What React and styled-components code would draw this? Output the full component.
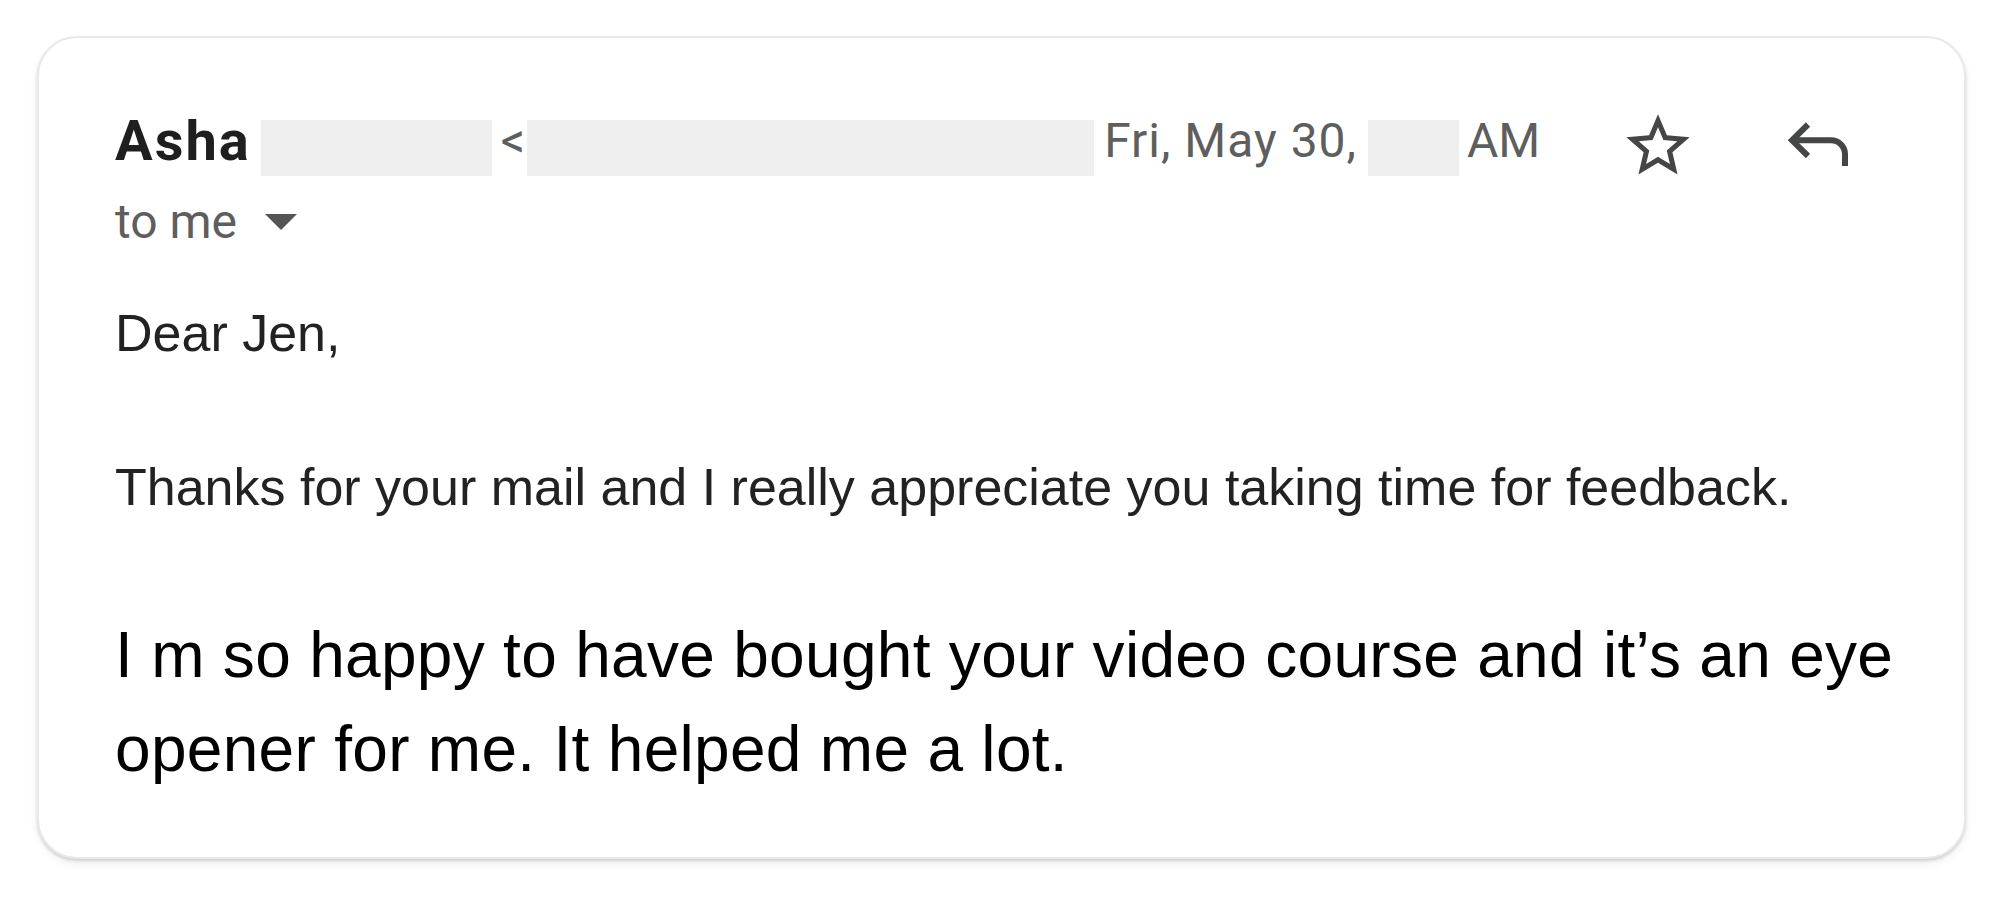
import React from "react";
import styled, { createGlobalStyle } from "styled-components";

const GlobalStyle = createGlobalStyle`
  html,
  body {
    margin: 0;
    background: #ffffff;
  }

  body {
    font-family: Roboto, "Liberation Sans", Arial, sans-serif;
  }
`;

const Page = styled.div`
  padding: 36px 38px 36px 37px;
`;

const Card = styled.article`
  background: #ffffff;
  border: 2px solid #e9e9e9;
  border-radius: 40px;
  box-shadow: 0 2px 3px rgba(0, 0, 0, 0.14), 0 5px 10px rgba(0, 0, 0, 0.06);
  padding: 70px 40px 61px 76px;
`;

const HeaderRow = styled.div`
  display: flex;
  align-items: center;
  height: 76px;
`;

const SenderName = styled.span`
  font: 700 56px/56px Roboto, sans-serif;
  letter-spacing: 2px;
  color: #1f1f1f;
  margin-bottom: 10px;
`;

const MetaText = styled.span`
  font: 400 48px/48px Roboto, sans-serif;
  letter-spacing: ${(p) => p.$ls || 0}px;
  color: #5e5e5e;
  white-space: nowrap;
  margin-left: ${(p) => p.$ml || 0}px;
  margin-bottom: 10px;
`;

// grey boxes that hide the address and the hour
const Redacted = styled.span`
  flex: none;
  width: ${(p) => p.$w}px;
  height: 56px;
  margin-left: ${(p) => p.$ml}px;
  margin-top: 3px;
  background: #efefef;
`;

const IconButton = styled.button`
  display: flex;
  align-items: center;
  justify-content: center;
  flex: none;
  padding: 0;
  border: 0;
  background: none;
  color: #444746;
  margin-left: ${(p) => p.$ml}px;
`;

const Recipients = styled.div`
  display: flex;
  align-items: center;
  margin-top: 14px;

  svg {
    margin-left: 28px;
  }
`;

const ToMe = styled.span`
  font: 400 48px/48px Roboto, sans-serif;
  color: #5e5e5e;
`;

const MessageBody = styled.div`
  font-family: "Liberation Sans", Arial, Helvetica, sans-serif;
`;

const Line = styled.p`
  margin: ${(p) => p.$mt}px 0 0;
  font-size: 52px;
  line-height: 60px;
  color: #222222;
`;

const BigLine = styled.p`
  margin: 91px 0 0;
  font-size: 64px;
  line-height: 94px;
  letter-spacing: 0.3px;
  color: #000000;
`;

const StarIcon = () => (
  <svg width="76" height="76" viewBox="0 0 24 24" fill="currentColor">
    <path d="M22 9.24l-7.19-.62L12 2 9.19 8.63 2 9.24l5.46 4.73L5.82 21 12 17.27 18.18 21l-1.63-7.03L22 9.24zM12 15.4l-3.76 2.27 1-4.28-3.32-2.88 4.38-.38L12 6.1l1.71 4.04 4.38.38-3.32 2.88 1 4.28L12 15.4z" />
  </svg>
);

const ReplyIcon = () => (
  <svg width="60" height="50" viewBox="0 0 60 50" fill="none" stroke="currentColor" strokeWidth="6">
    <path d="M20 3.5 L4 19.3 L20 35" />
    <path d="M4 19.3 H43 A14 14 0 0 1 57 33.3 V45" />
  </svg>
);

const Caret = () => (
  <svg width="32" height="16" viewBox="0 0 32 16">
    <path d="M0 0 H32 L16 16 Z" fill="#555555" />
  </svg>
);

export default function App() {
  return (
    <>
      <GlobalStyle />
      <Page>
        <Card>
          <HeaderRow>
            <SenderName>Asha</SenderName>
            <Redacted $w={231} $ml={10} />
            <MetaText $ml={9}>&lt;</MetaText>
            <Redacted $w={567} $ml={2} />
            <MetaText $ml={10} $ls={1}>
              Fri, May 30,
            </MetaText>
            <Redacted $w={91} $ml={11} />
            <MetaText $ml={8}>AM</MetaText>
            <IconButton $ml={80} aria-label="Star">
              <StarIcon />
            </IconButton>
            <IconButton $ml={92} aria-label="Reply">
              <ReplyIcon />
            </IconButton>
          </HeaderRow>

          <Recipients>
            <ToMe>to me</ToMe>
            <Caret />
          </Recipients>

          <MessageBody>
            <Line $mt={57}>Dear Jen,</Line>
            <Line $mt={94}>
              Thanks for your mail and I really appreciate you taking time for feedback.
            </Line>
            <BigLine>
              I m so happy to have bought your video course and it’s an eye opener for me. It
              helped me a lot.
            </BigLine>
          </MessageBody>
        </Card>
      </Page>
    </>
  );
}
